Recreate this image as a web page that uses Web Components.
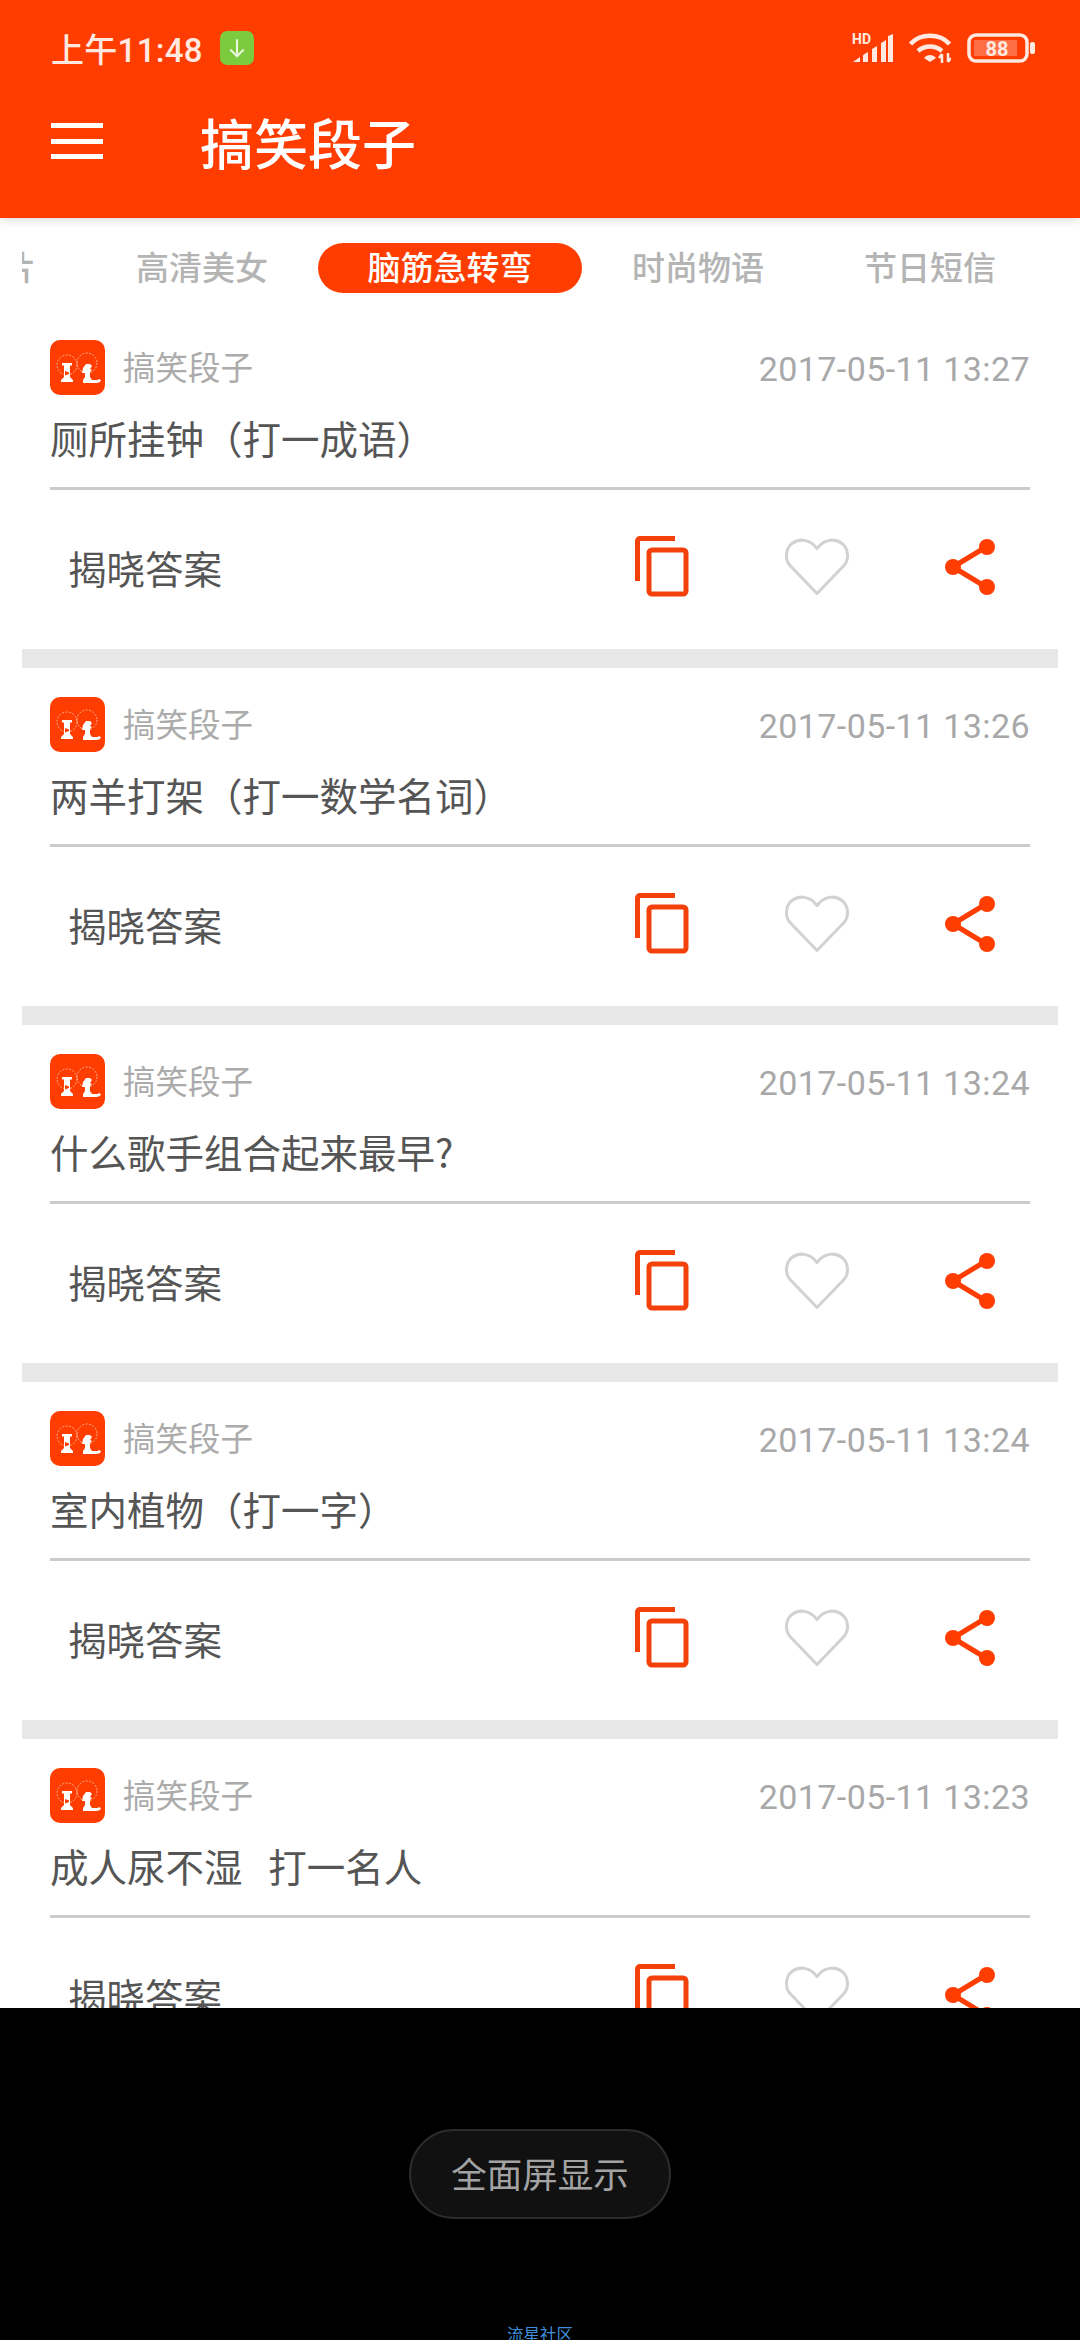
<!DOCTYPE html>
<html lang="zh">
<head>
<meta charset="utf-8">
<title>搞笑段子</title>
<style>
    html, body { margin: 0; height: 2340px; overflow: hidden; background: #000; }
    body {
        display: flex;
        flex-direction: column;
        font-family: Roboto, "Noto Sans CJK SC", sans-serif;
    }
</style>
</head>
<body>
<app-screen>
    <app-header slot="header">搞笑段子</app-header>
    <tab-strip></tab-strip>
    <joke-card date="2017-05-11 13:27">厕所挂钟（打一成语）</joke-card>
    <joke-card date="2017-05-11 13:26">两羊打架（打一数学名词）</joke-card>
    <joke-card date="2017-05-11 13:24">什么歌手组合起来最早?</joke-card>
    <joke-card date="2017-05-11 13:24">室内植物（打一字）</joke-card>
    <joke-card date="2017-05-11 13:23">成人尿不湿&nbsp;&nbsp;&nbsp;打一名人</joke-card>
</app-screen>
<nav-hint></nav-hint>

<script>
class AppScreen extends HTMLElement {
    constructor() {
        super();
        this.attachShadow({ mode: 'open' });
        this.shadowRoot.innerHTML = `
            <style>
                :host {
                    display: flex;
                    flex-direction: column;
                    height: 2008px;
                    flex: none;
                    overflow: hidden;
                    background: #fff;
                }
            </style>
            <slot name="header"></slot>
            <slot></slot>
        `;
    }
}

class StatusBar extends HTMLElement {
    constructor() {
        super();
        this.attachShadow({ mode: 'open' });
        this.shadowRoot.innerHTML = `
            <style>
                :host {
                    display: flex;
                    align-items: center;
                    height: 48px;
                    padding: 24px 45px 0 51px;
                    color: #ffe9e0;
                    font-family: Roboto, "Noto Sans CJK SC", sans-serif;
                }
                .time { font-size: 33px; font-weight: 500; letter-spacing: 0.3px; }
                .dl { width: 34px; height: 34px; margin-left: 17px; }
                .right { display: flex; align-items: center; margin-left: auto; }
                .sig { width: 41px; height: 30px; margin-right: 16px; }
                .wifi { width: 42px; height: 30px; margin-right: 16px; }
                .batt { width: 68px; height: 30px; }
            </style>
            <span class="time">上午11:48</span>
            <svg class="dl" viewBox="0 0 33 33">
                <rect width="33" height="33" rx="7" fill="#7ccb3f"/>
                <path d="M16.500 8v16M10 18l6.500 6.500L23 18" fill="none" stroke="#eaf7dc" stroke-width="2"/>
            </svg>
            <div class="right">
                <svg class="sig" viewBox="0 0 41 30" fill="#ffe9e0">
                    <text x="0" y="11" font-size="14" font-weight="700" font-family="Roboto, sans-serif">HD</text>
                    <path d="M1 29l7-5v5zM11 22l5-3v10h-5zM20 16l5-3v16h-5zM29 10l5-3v22h-5zM36 3l5-2v28h-5z"/>
                </svg>
                <svg class="wifi" viewBox="0 0 42 30" fill="none" stroke="#ffe9e0" stroke-width="4.500">
                    <path d="M1.500 11C11 0 31 0 40.500 11"/>
                    <path d="M9 18c7-6 17-6 24 0"/>
                    <path d="M15 25c3-4 9-4 12 0l-6 4z" fill="#ffe9e0" stroke="none"/>
                    <path d="M33 21v9M30 25l3-4M39 20v9M39 29l3-4" stroke-width="2.500"/>
                </svg>
                <svg class="batt" viewBox="0 0 68 30">
                    <rect x="2" y="2" width="58" height="26" rx="7" fill="none" stroke="#ffe9e0" stroke-width="3.500"/>
                    <rect x="7" y="7" width="43" height="16" fill="#ff6f45"/>
                    <rect x="63" y="9" width="5" height="12" rx="2" fill="#ffe9e0"/>
                    <text x="30" y="22.500" text-anchor="middle" font-size="20" font-weight="700" fill="#ffe9e0" font-family="Roboto, sans-serif">88</text>
                </svg>
            </div>
        `;
    }
}

class AppHeader extends HTMLElement {
    constructor() {
        super();
        this.attachShadow({ mode: 'open' });
        this.shadowRoot.innerHTML = `
            <style>
                :host {
                    display: block;
                    flex: none;
                    height: 218px;
                    background: #ff3d00;
                    color: #fff;
                    position: relative;
                    box-shadow: 0 2px 10px rgba(0,0,0,.14);
                    font-family: "Noto Sans CJK SC", sans-serif;
                }
                .bar { display: flex; align-items: center; height: 98px; padding: 0 51px; margin-top: 20px; }
                .menu { width: 52px; height: 36px; flex: none; }
                .title { margin-left: 97px; font-size: 54px; font-weight: 500; line-height: 1; position: relative; top: 1px; }
            </style>
            <status-bar></status-bar>
            <div class="bar">
                <svg class="menu" viewBox="0 0 52 36" fill="#fff">
                    <rect width="52" height="5" y="0"/>
                    <rect width="52" height="5" y="16"/>
                    <rect width="52" height="5" y="31"/>
                </svg>
                <span class="title"><slot></slot></span>
            </div>
        `;
    }
}

class TabStrip extends HTMLElement {
    constructor() {
        super();
        this.attachShadow({ mode: 'open' });
        const tabs = ['搞笑图片', '高清美女', '脑筋急转弯', '时尚物语', '节日短信'];
        this.shadowRoot.innerHTML = `
            <style>
                :host {
                    display: block;
                    flex: none;
                    height: 93px;
                    margin: 0 22px;
                    overflow: hidden;
                    font-family: "Noto Sans CJK SC", sans-serif;
                }
                .row { display: flex; align-items: flex-start; margin: 25px 0 0 -168px; width: 1300px; }
                .tab {
                    flex: none;
                    box-sizing: border-box;
                    width: 232px;
                    height: 50px;
                    line-height: 47px;
                    text-align: center;
                    font-size: 33px;
                    font-weight: 500;
                    color: #b4b4b4;
                }
                .on { width: 264px; background: #ff3d00; color: #fff; border-radius: 25px; }
            </style>
            <div class="row">
                ${tabs.map((t, i) => `<span class="tab ${i === 2 ? 'on' : ''}">${t}</span>`).join('')}
            </div>
        `;
    }
}

class JokeCard extends HTMLElement {
    constructor() {
        super();
        this.attachShadow({ mode: 'open' });
        this.shadowRoot.innerHTML = `
            <style>
                :host {
                    display: block;
                    flex: none;
                    box-sizing: border-box;
                    height: 357px;
                    margin: 0 22px;
                    padding: 29px 28px 0;
                    border-bottom: 19px solid #e8e8e8;
                    font-family: "Noto Sans CJK SC", sans-serif;
                }
                .meta { display: flex; align-items: center; height: 55px; }
                .logo { width: 55px; height: 55px; flex: none; }
                .src { margin-left: 18px; font-size: 32.500px; color: #ababab; line-height: 52px; height: 55px; }
                .date { margin-left: auto; font-family: Roboto, sans-serif; font-size: 34px; color: #a8a8a8; letter-spacing: .4px; position: relative; top: 1px; }
                .title {
                    height: 92px;
                    line-height: 84px;
                    font-size: 38.500px;
                    color: #555;
                    border-bottom: 3px solid #ccc;
                }
                .acts { box-sizing: border-box; display: flex; align-items: center; gap: 96px; height: 159px; padding: 0 35px 6px 18px; }
                .acts span { margin-right: auto; font-size: 38.500px; color: #555; }
                svg.ic { display: block; flex: none; }
            </style>
            <div class="meta">
                <svg class="logo" viewBox="0 0 55 55">
                    <rect width="55" height="55" rx="10" fill="#ff3d00"/>
                    <g fill="none" stroke="#ffc9b3" stroke-width=".8" stroke-dasharray="2 1.500">
                        <circle cx="17" cy="25" r="10"/>
                        <circle cx="37" cy="23" r="10"/>
                    </g>
                    <path d="M12 23h10v2.500h-2V37l3 3v2H11v-2l3-3V25.500h-2zM33 28l3-4h4l2 2-2 3 2 1-2 2v5l2 3h6v-1l3 1-1 2-3 1H33v-3l2-3v-4h-3z" fill="#fff"/>
                    <path d="M15 31l4 1.500v1.500l-4 1.500z" fill="#ff3d00"/>
                </svg>
                <span class="src">搞笑段子</span>
                <span class="date">${this.getAttribute('date')}</span>
            </div>
            <div class="title"><slot></slot></div>
            <div class="acts">
                <span>揭晓答案</span>
                <svg class="ic" width="54" height="61" viewBox="0 0 54 61" fill="none" stroke="#f4400a" stroke-width="5">
                    <path d="M2.500 45V5a2.500 2.500 0 0 1 2.500-2.500h35"/>
                    <rect x="14" y="14" width="37" height="44" rx="3"/>
                </svg>
                <svg class="ic" width="64" height="58" viewBox="0 0 64 58" fill="none" stroke="#d2d2d2" stroke-width="3">
                    <path d="M32 55.500 5.500 28C-1 21 1 10 7 5.500 14 0 25 1 32 10.500 39 1 50 0 57 5.500 63 10 65 21 58.500 28Z" stroke-linejoin="round"/>
                </svg>
                <svg class="ic" width="50" height="56" viewBox="0 0 50 56" fill="#ff3d00">
                    <path d="M8 28 41 8M8 28l33 20" stroke="#ff3d00" stroke-width="5"/>
                    <circle cx="8" cy="28" r="8"/>
                    <circle cx="42" cy="8" r="8"/>
                    <circle cx="42" cy="48" r="8"/>
                </svg>
            </div>
        `;
    }
}

class NavHint extends HTMLElement {
    constructor() {
        super();
        this.attachShadow({ mode: 'open' });
        this.shadowRoot.innerHTML = `
            <style>
                :host {
                    display: flex;
                    flex-direction: column;
                    align-items: center;
                    flex: none;
                    height: 332px;
                    overflow: hidden;
                    background: #000;
                    font-family: "Noto Sans CJK SC", sans-serif;
                }
                .pill {
                    flex: none;
                    box-sizing: border-box;
                    width: 262px;
                    height: 90px;
                    margin-top: 121px;
                    line-height: 83px;
                    text-align: center;
                    font-size: 35.500px;
                    color: #a3a3a3;
                    background: #111;
                    border: 2px solid #2c2c2c;
                    border-radius: 45px;
                }
                .mark { flex: none; margin-top: 105px; font-size: 16.500px; line-height: 20px; color: #3f8fdc; }
            </style>
            <div class="pill">全面屏显示</div>
            <div class="mark">流星社区</div>
        `;
    }
}

customElements.define('app-screen', AppScreen);
customElements.define('status-bar', StatusBar);
customElements.define('app-header', AppHeader);
customElements.define('tab-strip', TabStrip);
customElements.define('joke-card', JokeCard);
customElements.define('nav-hint', NavHint);
</script>
</body>
</html>
